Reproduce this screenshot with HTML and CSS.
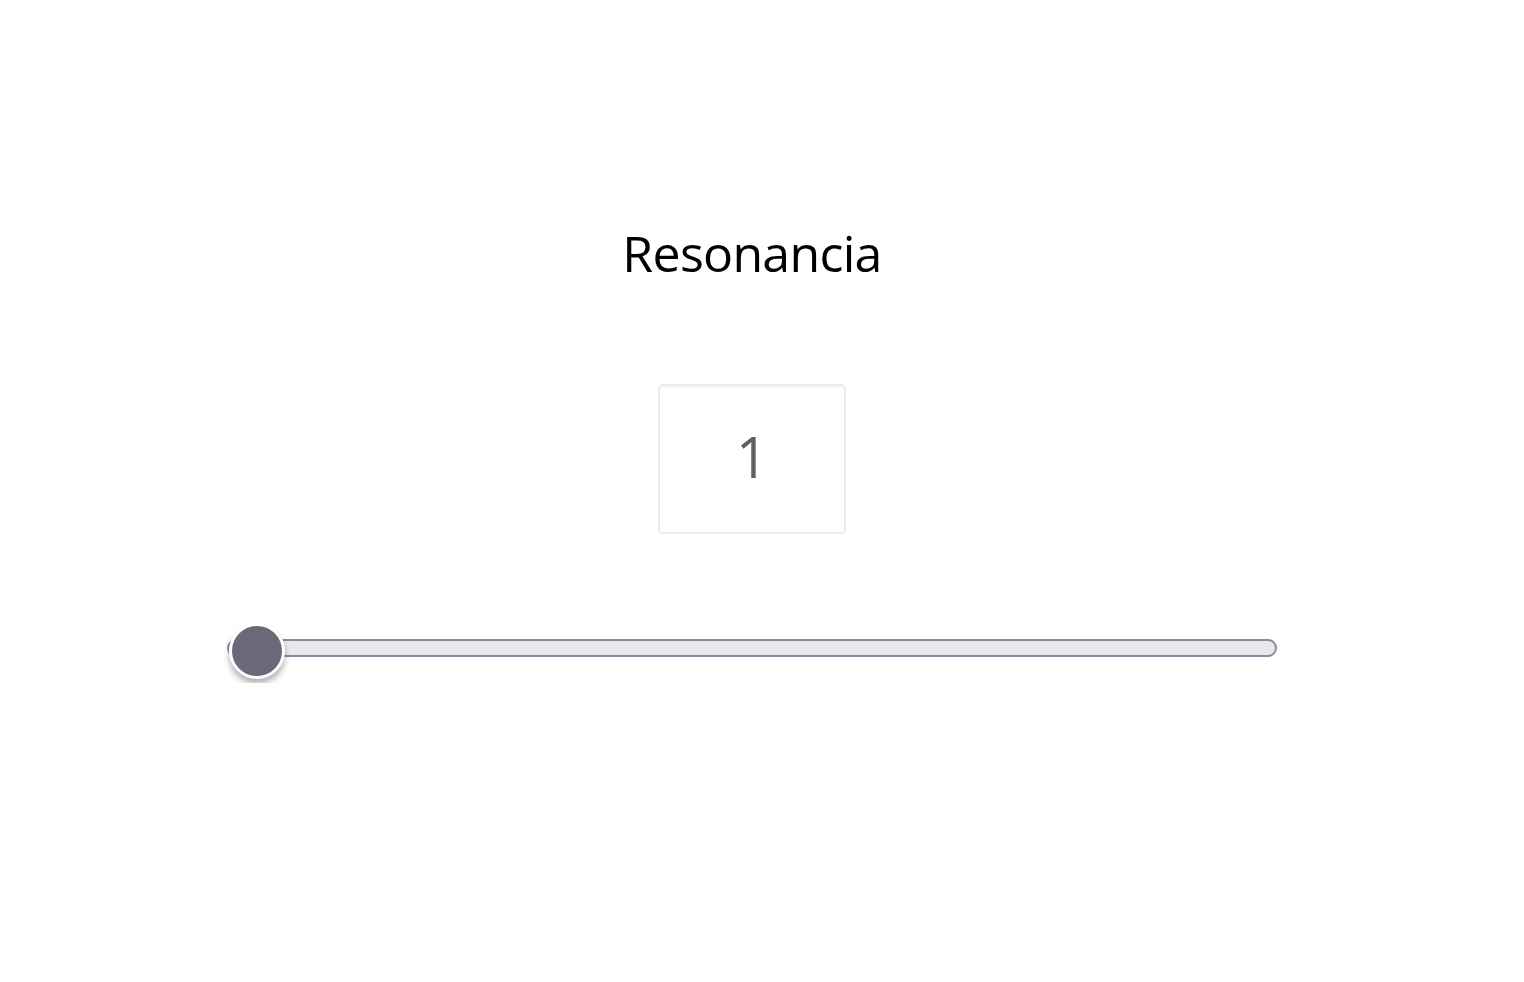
FILE: index.html
```html
<!DOCTYPE html>
<html lang="es">
<head>
<meta charset="utf-8">
<title>Resonancia</title>
<link rel="stylesheet" href="styles.css">
</head>
<body>
<main class="page">
  <h1 class="title">Resonancia</h1>
  <div class="value-box">1</div>
  <input class="slider" type="range" min="1" max="100" value="1" aria-label="Resonancia">
</main>
</body>
</html>
```
FILE: styles.css
```css
html, body {
  margin: 0;
  padding: 0;
  background: #ffffff;
}

.page {
  width: 1504px;
  display: flex;
  flex-direction: column;
  align-items: center;
  padding-top: 218px;
  font-family: "Open Sans", "Noto Sans", sans-serif;
}

.title {
  margin: 0;
  font-size: 50px;
  line-height: 70px;
  font-weight: 400;
  color: #000;
  letter-spacing: -0.7px;
}

.value-box {
  margin-top: 96px;
  width: 188px;
  height: 150px;
  box-sizing: border-box;
  border: 2px solid #ececec;
  border-radius: 5px;
  box-shadow: inset 0 2px 2px rgba(0,0,0,0.03);
  display: flex;
  align-items: center;
  justify-content: center;
  font-size: 56px;
  color: #5f5f68;
  padding-bottom: 6px;
}

.slider {
  -webkit-appearance: none;
  appearance: none;
  margin: 79px 0 0 0;
  width: 1050px;
  height: 70px;
  background: transparent;
  padding: 0;
}

.slider::-webkit-slider-runnable-track {
  height: 18px;
  box-sizing: border-box;
  border: 2px solid #8c8a9c;
  border-radius: 9px;
  background: #e9e8ee;
}

.slider::-webkit-slider-thumb {
  -webkit-appearance: none;
  appearance: none;
  width: 56px;
  height: 56px;
  margin-top: -18px;
  box-sizing: border-box;
  border-radius: 50%;
  background: #6a6979;
  border: 3px solid #ffffff;
  box-shadow: 0 5px 6px rgba(0,0,0,0.3);
}
```
